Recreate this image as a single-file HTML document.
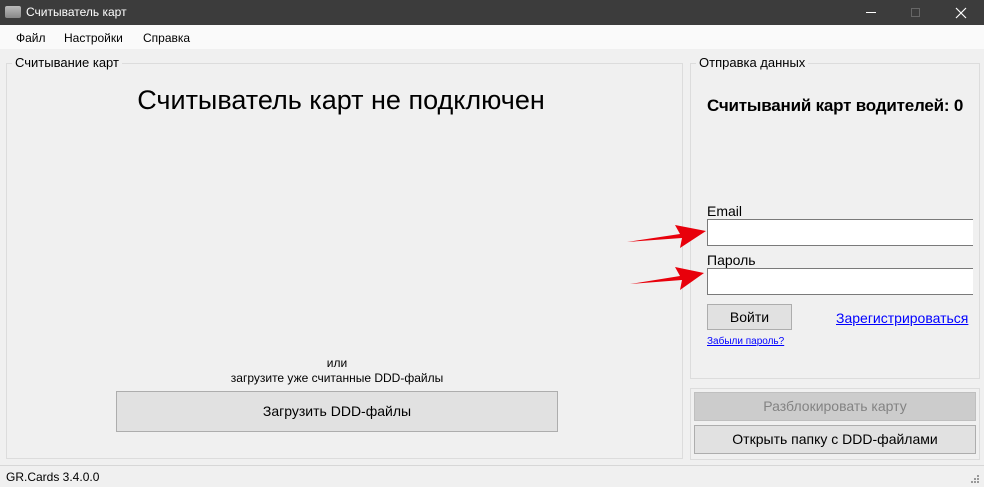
<!DOCTYPE html>
<html><head><meta charset="utf-8"><style>
*{margin:0;padding:0;box-sizing:border-box}
body{width:984px;height:487px;background:#f0f0f0;font-family:"Liberation Sans",sans-serif;font-size:12px;color:#000;position:relative;overflow:hidden}
.a{position:absolute}
.gb{position:absolute;border:1px solid #dcdcdc}
.lg{position:absolute;background:#f0f0f0;padding:0 3px;font-size:13px}
.btn{position:absolute;background:#e1e1e1;border:1px solid #adadad;text-align:center;font-size:14px}
.in{position:absolute;background:#fff;border:1px solid #7a7a7a;border-right:none}
</style></head><body>
<div class="a" style="left:0;top:0;width:984px;height:25px;background:#3c3c3c"></div>
<div class="a" style="left:5px;top:6px;width:16px;height:12px;background:linear-gradient(#bbb,#888);border-radius:2px"></div>
<div class="a" style="left:26px;top:5px;color:#fff;font-size:12px">Считыватель карт</div>
<div class="a" style="left:866px;top:12px;width:10px;height:1px;background:#fff"></div>
<div class="a" style="left:911px;top:8px;width:9px;height:9px;border:1px solid #666"></div>
<svg class="a" style="left:955px;top:7px" width="12" height="12"><path d="M1 1L11 11M11 1L1 11" stroke="#fff" stroke-width="1.2"/></svg>
<div class="a" style="left:0;top:25px;width:984px;height:24px;background:#fafafa"></div>
<div class="a" style="left:16px;top:31px;font-size:12px">Файл</div>
<div class="a" style="left:64px;top:31px;font-size:12px">Настройки</div>
<div class="a" style="left:143px;top:31px;font-size:12px">Справка</div>

<div class="gb" style="left:6px;top:63px;width:677px;height:396px"></div>
<div class="lg" style="left:12px;top:55px">Считывание карт</div>
<div class="a" style="left:0;top:85px;width:682px;text-align:center;font-size:27px">Считыватель карт не подключен</div>
<div class="a" style="left:6px;top:356px;width:662px;text-align:center;font-size:12px;line-height:15px">или<br>загрузите уже считанные DDD-файлы</div>
<div class="btn" style="left:116px;top:391px;width:442px;height:41px;line-height:39px">Загрузить DDD-файлы</div>

<div class="gb" style="left:690px;top:63px;width:290px;height:316px"></div>
<div class="lg" style="left:696px;top:55px">Отправка данных</div>
<div class="a" style="left:707px;top:96px;font-size:17px;font-weight:bold;letter-spacing:-0.2px">Считываний карт водителей: 0</div>
<div class="a" style="left:707px;top:203px;font-size:14px">Email</div>
<div class="in" style="left:707px;top:219px;width:266px;height:27px"></div>
<div class="a" style="left:707px;top:252px;font-size:14px">Пароль</div>
<div class="in" style="left:707px;top:268px;width:266px;height:27px"></div>
<div class="btn" style="left:707px;top:304px;width:85px;height:26px;line-height:24px">Войти</div>
<div class="a" style="left:836px;top:310px;font-size:14px;color:#0000ff;text-decoration:underline">Зарегистрироваться</div>
<div class="a" style="left:707px;top:336px;font-size:10px;color:#0000ff;text-decoration:underline">Забыли пароль?</div>

<svg class="a" style="left:620px;top:215px" width="90" height="75">
<path d="M7 27 L60 19 L55 10 L86 16 L60 33 L62 23 Z" fill="#e8000b"/>
<path d="M10 69 L60 61 L55 52 L84 58 L60 75 L62 65 Z" fill="#e8000b"/>
</svg>

<div class="gb" style="left:690px;top:388px;width:290px;height:72px"></div>
<div class="btn" style="left:694px;top:392px;width:282px;height:29px;line-height:27px;background:#cccccc;border-color:#bfbfbf;color:#838383">Разблокировать карту</div>
<div class="btn" style="left:694px;top:425px;width:282px;height:29px;line-height:27px">Открыть папку с DDD-файлами</div>

<div class="a" style="left:0;top:465px;width:984px;height:1px;background:#d7d7d7"></div>
<div class="a" style="left:6px;top:470px;font-size:12px">GR.Cards 3.4.0.0</div>
<svg class="a" style="left:970px;top:474px" width="10" height="10"><g fill="#999"><rect x="7" y="1" width="2" height="2"/><rect x="4" y="4" width="2" height="2"/><rect x="7" y="4" width="2" height="2"/><rect x="1" y="7" width="2" height="2"/><rect x="4" y="7" width="2" height="2"/><rect x="7" y="7" width="2" height="2"/></g></svg>
</body></html>
